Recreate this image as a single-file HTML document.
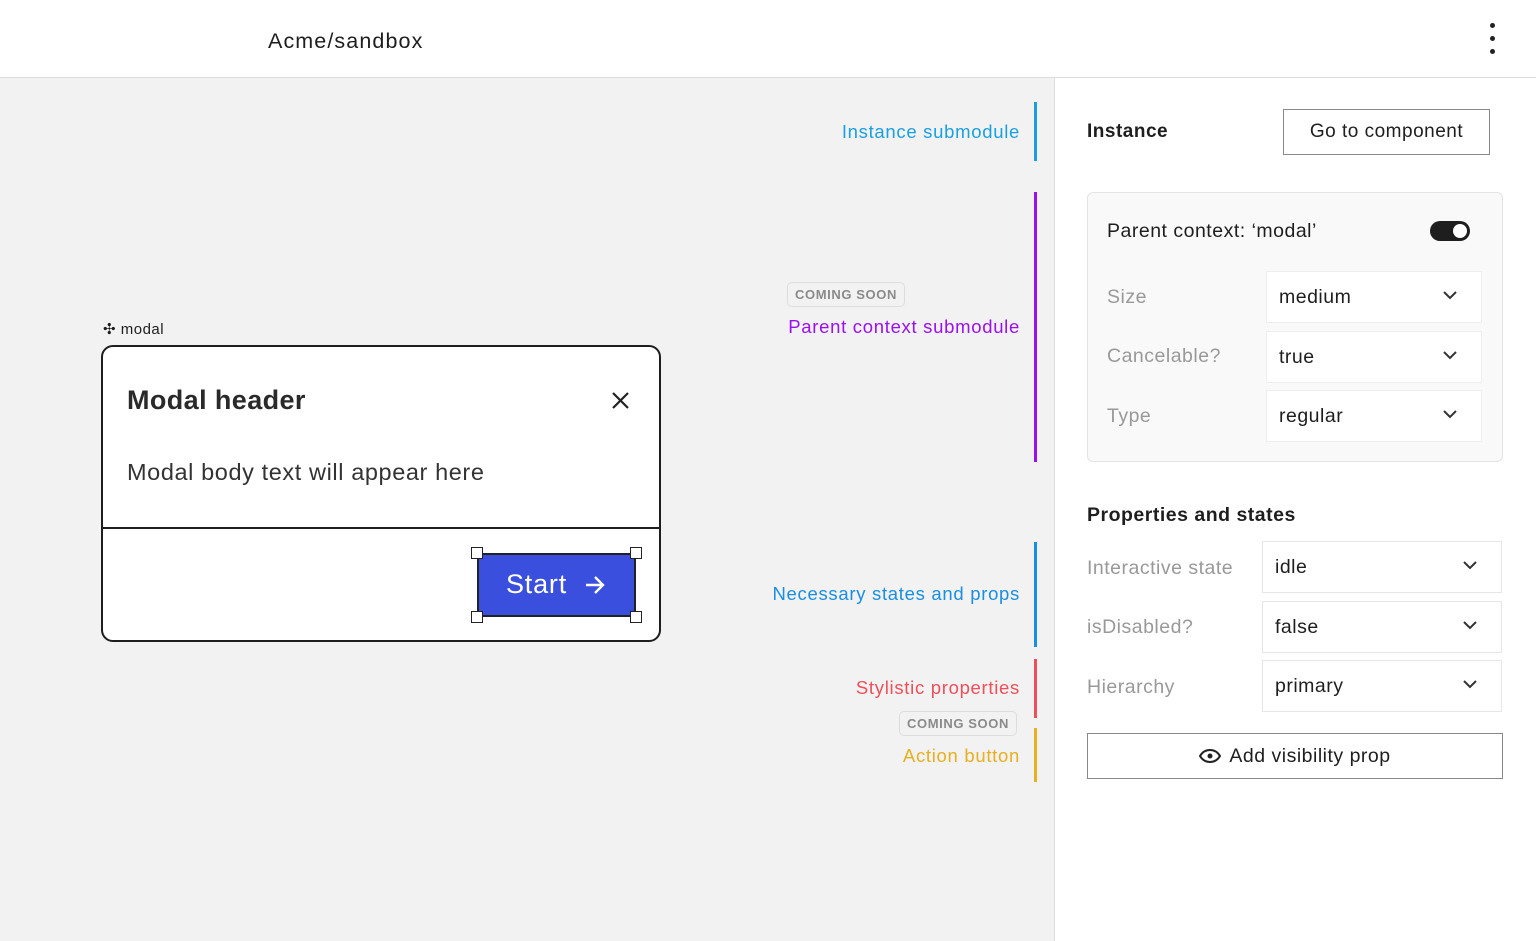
<!DOCTYPE html>
<html><head><style>
*{box-sizing:border-box;margin:0;padding:0}
body{width:1536px;height:941px;position:relative;overflow:hidden;font-family:"Liberation Sans",sans-serif;background:#f2f2f2;color:#1e1e1e;letter-spacing:.5px}
.a{position:absolute}
.top{left:0;top:0;width:1536px;height:78px;background:#fff;border-bottom:1px solid #ddd}
.side{left:1054px;top:78px;width:482px;height:863px;background:#fff;border-left:1px solid #ddd}
.lbl{font-size:18.5px;text-align:right;right:516px;letter-spacing:.7px}
.bar{width:3px;left:1034px}
.soon{font-size:13px;font-weight:bold;color:#8a8a8a;border:1px solid #ddd;border-radius:5px;padding:4px 7px;letter-spacing:.6px;background:#f2f2f2}
.sel{background:#fff;border:1px solid #eee;font-size:19.5px;padding-left:12px;display:flex;align-items:center;height:52px}
.sel svg{position:absolute;right:24px;top:19px}
.gl{font-size:19.5px;color:#999}
</style></head><body>
<div class="a top"></div>
<div class="a" style="left:268px;top:29px;font-size:21.5px;letter-spacing:1.1px">Acme/sandbox</div>
<div class="a" style="left:1490px;top:23px;width:5px;height:5px;border-radius:50%;background:#222;box-shadow:0 13px 0 #222,0 26px 0 #222"></div>

<div class="a lbl" style="top:121px;color:#1aa0e0">Instance submodule</div>
<div class="a bar" style="top:102px;height:59px;background:#1aa0e0"></div>
<div class="a soon" style="left:787px;top:282px">COMING SOON</div>
<div class="a lbl" style="top:316px;color:#9b10ee">Parent context submodule</div>
<div class="a bar" style="top:192px;height:270px;background:#9b10ee"></div>
<div class="a lbl" style="top:583px;color:#1a8ee0">Necessary states and props</div>
<div class="a bar" style="top:542px;height:105px;background:#1a8ee0"></div>
<div class="a lbl" style="top:677px;color:#ef4f5a">Stylistic properties</div>
<div class="a bar" style="top:659px;height:59px;background:#ef4f5a"></div>
<div class="a soon" style="left:899px;top:711px">COMING SOON</div>
<div class="a lbl" style="top:745px;color:#e8b021">Action button</div>
<div class="a bar" style="top:728px;height:54px;background:#e8b021"></div>

<div class="a" style="left:103px;top:320px;font-size:15px">✣ modal</div>
<div class="a" style="left:101px;top:345px;width:560px;height:297px;background:#fff;border:2px solid #1e1e1e;border-radius:12px"></div>
<div class="a" style="left:103px;top:527px;width:556px;height:2px;background:#1e1e1e"></div>
<div class="a" style="left:127px;top:385px;font-size:27px;font-weight:bold;color:#2a2a2a;letter-spacing:.4px">Modal header</div>
<svg class="a" style="left:611px;top:391px" width="19" height="19"><path d="M2 2L17 17M17 2L2 17" stroke="#222" stroke-width="2.2"/></svg>
<div class="a" style="left:127px;top:459px;font-size:23.5px;color:#333;letter-spacing:.6px">Modal body text will appear here</div>
<div class="a" style="left:477px;top:553px;width:159px;height:64px;background:#3a4fdd;border:2px solid #222;color:#fff;font-size:27px;padding:14px 0 0 27px;letter-spacing:.8px">Start</div>
<svg class="a" style="left:584px;top:575px" width="22" height="20"><path d="M2 10H19M11 2L19 10L11 18" stroke="#fff" stroke-width="2.4" fill="none"/></svg>
<div class="a" style="left:471px;top:547px;width:12px;height:12px;background:#fff;border:1.5px solid #222"></div>
<div class="a" style="left:630px;top:547px;width:12px;height:12px;background:#fff;border:1.5px solid #222"></div>
<div class="a" style="left:471px;top:611px;width:12px;height:12px;background:#fff;border:1.5px solid #222"></div>
<div class="a" style="left:630px;top:611px;width:12px;height:12px;background:#fff;border:1.5px solid #222"></div>

<div class="a side"></div>
<div class="a" style="left:1087px;top:121px;font-size:19px;font-weight:bold">Instance</div>
<div class="a" style="left:1283px;top:109px;width:207px;height:46px;border:1.5px solid #888;font-size:19px;display:flex;align-items:center;justify-content:center">Go to component</div>
<div class="a" style="left:1087px;top:192px;width:416px;height:270px;background:#f9f9f9;border:1px solid #e4e4e4;border-radius:6px"></div>
<div class="a" style="left:1107px;top:220px;font-size:19.5px">Parent context: ‘modal’</div>
<div class="a" style="left:1430px;top:221px;width:40px;height:20px;border-radius:10px;background:#1e1e1e"><div style="position:absolute;right:3px;top:3px;width:14px;height:14px;border-radius:50%;background:#fff"></div></div>
<div class="a gl" style="left:1107px;top:286px">Size</div>
<div class="a gl" style="left:1107px;top:345px">Cancelable?</div>
<div class="a gl" style="left:1107px;top:405px">Type</div>
<div class="a sel" style="left:1266px;top:271px;width:216px">medium<svg width="14" height="9"><path d="M1 1L7 7L13 1" stroke="#333" stroke-width="2" fill="none"/></svg></div>
<div class="a sel" style="left:1266px;top:331px;width:216px">true<svg width="14" height="9"><path d="M1 1L7 7L13 1" stroke="#333" stroke-width="2" fill="none"/></svg></div>
<div class="a sel" style="left:1266px;top:390px;width:216px">regular<svg width="14" height="9"><path d="M1 1L7 7L13 1" stroke="#333" stroke-width="2" fill="none"/></svg></div>

<div class="a" style="left:1087px;top:504px;font-size:19.5px;font-weight:bold">Properties and states</div>
<div class="a gl" style="left:1087px;top:557px">Interactive state</div>
<div class="a gl" style="left:1087px;top:616px">isDisabled?</div>
<div class="a gl" style="left:1087px;top:676px">Hierarchy</div>
<div class="a sel" style="left:1262px;top:541px;width:240px;border-color:#e6e6e6">idle<svg width="14" height="9"><path d="M1 1L7 7L13 1" stroke="#333" stroke-width="2" fill="none"/></svg></div>
<div class="a sel" style="left:1262px;top:601px;width:240px;border-color:#e6e6e6">false<svg width="14" height="9"><path d="M1 1L7 7L13 1" stroke="#333" stroke-width="2" fill="none"/></svg></div>
<div class="a sel" style="left:1262px;top:660px;width:240px;border-color:#e6e6e6">primary<svg width="14" height="9"><path d="M1 1L7 7L13 1" stroke="#333" stroke-width="2" fill="none"/></svg></div>
<div class="a" style="left:1087px;top:733px;width:416px;height:46px;border:1.5px solid #888;font-size:19.5px;display:flex;align-items:center;justify-content:center;gap:8px">
<svg width="22" height="14"><path d="M1 7C4 2 8 1 11 1S18 2 21 7C18 12 14 13 11 13S4 12 1 7Z" stroke="#222" stroke-width="2" fill="none"/><circle cx="11" cy="7" r="2.5" fill="#222"/></svg>Add visibility prop</div>
</body></html>
